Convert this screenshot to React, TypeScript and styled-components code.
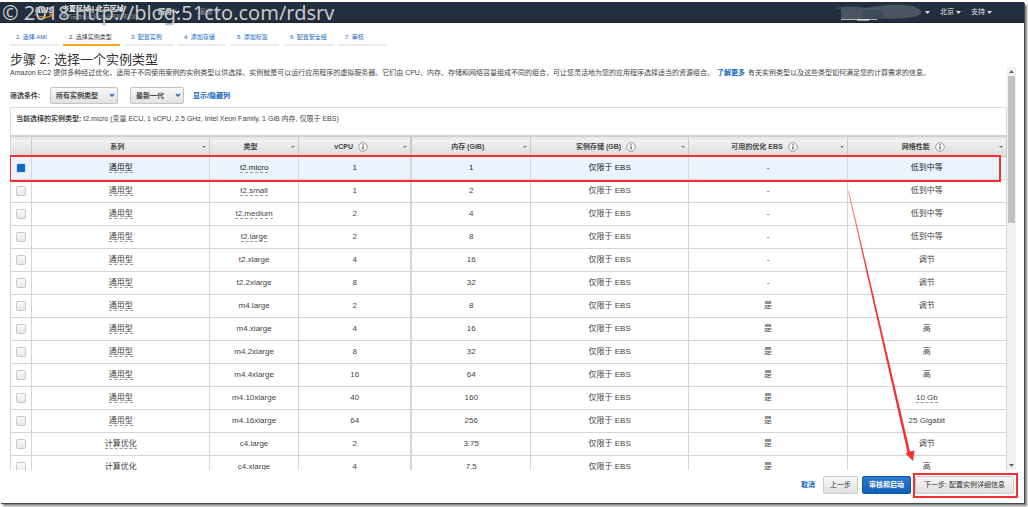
import React from "react";
import styled, { createGlobalStyle, css } from "styled-components";

const RED = "#f5302f";
const LINE = "#d5d5d5";

const GlobalStyle = createGlobalStyle`
  *, *::before, *::after { box-sizing: border-box; }
  html, body { margin: 0; padding: 0; background: #fff; }
  body {
    font-family: "Liberation Sans", "Noto Sans CJK SC", sans-serif;
    font-size: 8px;
    line-height: 12px;
    color: #444;
  }
  a { color: #1166bb; text-decoration: none; }
  button, select, input { font: inherit; color: inherit; margin: 0; }
`;

const Stage = styled.div`
  height: 100vh;
  min-height: 400px;
  padding: 2px 4px 4px 0;
  overflow: hidden;
`;

const Frame = styled.div`
  position: relative;
  height: 100%;
  display: flex;
  flex-direction: column;
  background: #fff;
  box-shadow: 1px 1px 0 #4a4a4a, 3px 3px 2px 0 rgba(0, 0, 0, 0.5);
`;

const NavBar = styled.header`
  flex: none;
  height: 21px;
  display: flex;
  align-items: center;
  padding: 0 32px 0 34px;
  background: #232f3e;
  border-bottom: 1px solid #1a2430;
  color: #e4e6e8;
  font-size: 7px;
  line-height: 10px;
`;

const Region = styled.div`
  margin-left: 7px;
  font-size: 7px;
  font-weight: bold;
  line-height: 9px;
  color: #fff;
`;

const RegionNote = styled.div`
  font-size: 5px;
  font-weight: normal;
  line-height: 7px;
  color: #9aa3ad;
`;

const NavItem = styled.button<{ $gap?: number; $dim?: boolean }>`
  display: flex;
  align-items: center;
  gap: 2px;
  margin-left: ${(p) => p.$gap ?? 10}px;
  padding: 0;
  border: 0;
  background: none;
  opacity: ${(p) => (p.$dim ? 0.5 : 1)};
`;

const Spacer = styled.div`
  flex: 1;
`;

const Watermark = styled.div`
  position: absolute;
  left: 2px;
  top: -2px;
  font-family: "Noto Sans", sans-serif;
  font-size: 20px;
  line-height: 26px;
  white-space: nowrap;
  color: #c9cbce;
  text-shadow: 0 0 1px #1b222c;
  pointer-events: none;
`;

const Steps = styled.nav`
  flex: none;
  display: flex;
  gap: 5px;
  padding: 6px 10px 0;
`;

const Step = styled.a<{ $active?: boolean; $w: number }>`
  width: ${(p) => p.$w}px;
  height: 17px;
  padding: 2px 6px 0;
  font-size: 6px;
  line-height: 12px;
  white-space: nowrap;
  border-bottom: 2px solid #ececec;
  ${(p) =>
    p.$active &&
    css`
      color: #444;
      border-color: #f5a623;
    `}
`;

const Title = styled.h1`
  flex: none;
  margin: 0;
  padding: 6px 10px 0;
  font-size: 13px;
  font-weight: normal;
  line-height: 15px;
  color: #333;
`;

const Body = styled.div`
  flex: 1;
  min-height: 0;
  display: flex;
  padding: 0 8px 0 10px;
`;

const Content = styled.main`
  flex: 1;
  min-width: 0;
  overflow: hidden;
`;

const Intro = styled.p`
  margin: 0;
  font-size: 7px;
  line-height: 11px;
  white-space: nowrap;
`;

const MoreLink = styled.a`
  margin: 0 3px;
  font-weight: bold;
`;

const Filters = styled.div`
  display: flex;
  align-items: center;
  padding: 9px 0 3px;
  font-size: 7px;
  font-weight: bold;
`;

const FilterLabel = styled.label`
  width: 40px;
`;

const SelectWrap = styled.span`
  position: relative;
  display: flex;
  margin-right: 12px;
  svg {
    position: absolute;
    right: 3px;
    top: 6px;
    pointer-events: none;
  }
`;

const Select = styled.select<{ $w: number }>`
  appearance: none;
  width: ${(p) => p.$w}px;
  height: 17px;
  padding: 0 5px;
  border: 1px solid #c4c4c4;
  border-radius: 2px;
  background: linear-gradient(#f8f8f8, #e2e2e2);
  outline: none;
`;

const ColumnsLink = styled.a`
  margin-left: -3px;
`;

const Current = styled.div`
  height: 28px;
  padding: 5px;
  border: 1px solid #dcdcdc;
  border-bottom: 0;
  font-size: 7px;
`;

const TableWrap = styled.div`
  position: relative;
`;

const Table = styled.table`
  width: 100%;
  table-layout: fixed;
  border-collapse: separate;
  border-spacing: 0;
  border-left: 1px solid ${LINE};
  text-align: center;
`;

const Th = styled.th<{ $thick?: boolean }>`
  height: 22px;
  padding: 0;
  font-size: 7px;
  background: linear-gradient(#e6e6e6, #f0f0f0 20%, #dedede);
  border-top: 2px solid #cfcfcf;
  border-bottom: 1px solid #bdbdbd;
  border-right: ${(p) => (p.$thick ? "2px" : "1px")} solid #c9c9c9;
`;

const HeadInner = styled.div`
  display: flex;
  align-items: center;
  padding-right: 3px;
`;

const HeadLabel = styled.span`
  flex: 1;
  display: flex;
  align-items: center;
  justify-content: center;
  gap: 5px;
`;

const Td = styled.td<{ $thick?: boolean }>`
  height: 23px;
  padding: 0;
  border-bottom: 1px solid ${LINE};
  border-right: ${(p) => (p.$thick ? "2px" : "1px")} solid ${LINE};
`;

const Row = styled.tr<{ $selected?: boolean }>`
  ${(p) =>
    p.$selected &&
    css`
      background: #eaf3fe;
      color: #222;
    `}
`;

const Hint = styled.span`
  display: inline-block;
  line-height: 9px;
  border-bottom: 1px dashed #999;
`;

const Check = styled.input`
  appearance: none;
  display: block;
  width: 10px;
  height: 10px;
  margin: 0 auto;
  border: 1px solid #c8c8c8;
  border-radius: 2px;
  background: linear-gradient(#fafafa, #e8e8e8);
  &:checked {
    border-color: #d3dfec;
    background: #1568c4;
  }
`;

const RowMark = styled.div`
  position: absolute;
  left: -1px;
  right: 6px;
  top: 20px;
  height: 27px;
  border: 2px solid ${RED};
  pointer-events: none;
`;

const ScrollTrack = styled.div`
  flex: none;
  width: 9px;
  display: flex;
  flex-direction: column;
  align-items: center;
  justify-content: space-between;
  background: #f1f1f1;
  padding: 3px 0;
`;

const ScrollThumb = styled.div`
  width: 7px;
  height: 37%;
  margin-top: 3px;
  background: #c1c1c1;
`;

const Footer = styled.footer`
  flex: none;
  height: 33px;
  display: flex;
  align-items: flex-start;
  justify-content: flex-end;
  gap: 4px;
  padding: 6px 10px 0;
  font-size: 7px;
`;

const Cancel = styled.a`
  margin-right: 4px;
  line-height: 17px;
  font-weight: bold;
`;

const Button = styled.button<{ $primary?: boolean; $wide?: boolean }>`
  height: 18px;
  padding: 0 ${(p) => (p.$wide ? 8 : 6)}px;
  border: 1px solid ${(p) => (p.$primary ? "#0f58a8" : "#cacaca")};
  border-radius: 2px;
  background: ${(p) =>
    p.$primary ? "linear-gradient(#2b7bd3, #1160b8)" : "linear-gradient(#f8f8f8, #e0e0e0)"};
  color: ${(p) => (p.$primary ? "#fff" : "#333")};
  font-weight: ${(p) => (p.$primary ? "bold" : "normal")};
  white-space: nowrap;
`;

const Marked = styled.span`
  position: relative;
  display: flex;
  &::after {
    content: "";
    position: absolute;
    inset: -3px -4px -4px -2px;
    border: 2px solid ${RED};
    pointer-events: none;
  }
`;

const Pointer = styled.svg`
  position: absolute;
  right: 106px;
  bottom: 41px;
  pointer-events: none;
`;

const Caret = ({ up, color = "#666" }: { up?: boolean; color?: string }) => (
  <svg width="5" height="3" viewBox="0 0 5 3" aria-hidden="true">
    <path d={up ? "M0 3h5L2.500 0z" : "M0 0h5L2.500 3z"} fill={color} />
  </svg>
);

const SortCaret = () => (
  <svg width="4" height="2" viewBox="0 0 4 2" aria-hidden="true">
    <path d="M0 0h4L2 2z" fill="#777" />
  </svg>
);

const Chevron = ({ color }: { color: string }) => (
  <svg width="6" height="5" viewBox="0 0 6 5" aria-hidden="true">
    <path d="M1 1l2 2 2-2" fill="none" stroke={color} strokeWidth="1.4" />
  </svg>
);

const Info = () => (
  <svg width="10" height="10" viewBox="0 0 10 10" aria-hidden="true">
    <circle cx="5" cy="5" r="4.300" fill="#f7f7f7" stroke="#888" strokeWidth=".8" />
    <path d="M5 4.200v3.200M5 2.200v1.200" stroke="#555" strokeWidth="1.200" />
  </svg>
);

const AwsLogo = () => (
  <svg width="21" height="14" viewBox="0 0 21 14" aria-label="aws">
    <text x="1" y="8" fill="#fff" fontSize="10" fontWeight="bold" fontFamily="Liberation Sans, sans-serif">
      aws
    </text>
    <path d="M1 9.500Q10 15 18 10.500M15.500 9.500l3.500 0-1 3" fill="none" stroke="#f79400" strokeWidth="1.300" />
  </svg>
);

const Scribble = () => (
  <svg width="88" height="17" viewBox="0 0 88 17" aria-hidden="true">
    <path d="M0 4Q16 1 32 4Q58 -2 78 2Q92 8 82 12Q66 16 44 14L42 16H6V5z" fill="#4b555f" />
    <path d="M27 6h21v9H27z" fill="#3f4b57" />
    <path d="M6 15.500h36" stroke="#aeb4ba" />
    <path d="M22 16h12" stroke="#fff" />
  </svg>
);

const steps: [string, number][] = [
  ["选择 AMI", 48],
  ["选择实例类型", 57],
  ["配置实例", 48],
  ["添加存储", 48],
  ["添加标签", 48],
  ["配置安全组", 50],
  ["审核", 48],
];

const columns: { label: string; width?: string; info?: boolean; thick?: boolean }[] = [
  { label: "系列", width: "17.900%" },
  { label: "类型", width: "8.900%" },
  { label: "vCPU", width: "11.400%", info: true, thick: true },
  { label: "内存 (GiB)", width: "11.900%" },
  { label: "实例存储 (GB)", width: "15.900%", info: true },
  { label: "可用的优化 EBS", width: "15.900%", info: true },
  { label: "网络性能", info: true },
];

const G = "通用型";
const C = "计算优化";
const rows: [string, string, string, string, string, string][] = [
  [G, "t2.micro", "1", "1", "-", "低到中等"],
  [G, "t2.small", "1", "2", "-", "低到中等"],
  [G, "t2.medium", "2", "4", "-", "低到中等"],
  [G, "t2.large", "2", "8", "-", "低到中等"],
  [G, "t2.xlarge", "4", "16", "-", "调节"],
  [G, "t2.2xlarge", "8", "32", "-", "调节"],
  [G, "m4.large", "2", "8", "是", "调节"],
  [G, "m4.xlarge", "4", "16", "是", "高"],
  [G, "m4.2xlarge", "8", "32", "是", "高"],
  [G, "m4.4xlarge", "16", "64", "是", "高"],
  [G, "m4.10xlarge", "40", "160", "是", "10 Gb"],
  [G, "m4.16xlarge", "64", "256", "是", "25 Gigabit"],
  [C, "c4.large", "2", "3.75", "是", "调节"],
  [C, "c4.xlarge", "4", "7.5", "是", "高"],
];
const hinted = new Set(["t2.micro", "t2.small", "t2.medium", "t2.large", "10 Gb"]);
const maybeHint = (t: string) => (hinted.has(t) ? <Hint>{t}</Hint> : t);

export default function App() {
  return (
    <>
      <GlobalStyle />
      <Stage>
        <Frame>
          <NavBar>
            <AwsLogo />
            <Region>
              宁夏区域 | 北京区域
              <RegionNote>由西云数据运营 | 由光环新网运营</RegionNote>
            </Region>
            <NavItem $gap={22}>
              <b>服务</b> <Chevron color="#fff" />
            </NavItem>
            <NavItem $dim $gap={18}>
              编辑 <Chevron color="#fff" />
            </NavItem>
            <Spacer />
            <Scribble />
            <NavItem $gap={2} aria-label="账户">
              <Caret color="#ddd" />
            </NavItem>
            <NavItem>
              北京 <Caret color="#ddd" />
            </NavItem>
            <NavItem>
              支持 <Caret color="#ddd" />
            </NavItem>
          </NavBar>

          <Steps>
            {steps.map(([label, w], i) => (
              <Step key={label} href="#" $active={i === 1} $w={w}>
                {i + 1}. {label}
              </Step>
            ))}
          </Steps>
          <Title>步骤 2: 选择一个实例类型</Title>

          <Body>
            <Content>
              <Intro>
                Amazon EC2 提供多种经过优化，适用于不同使用案例的实例类型以供选择。实例就是可以运行应用程序的虚拟服务器。它们由
                CPU、内存、存储和网络容量组成不同的组合，可让您灵活地为您的应用程序选择适当的资源组合。
                <MoreLink href="#">了解更多</MoreLink>
                有关实例类型以及这些类型如何满足您的计算需求的信息。
              </Intro>
              <Filters>
                <FilterLabel htmlFor="family">筛选条件:</FilterLabel>
                <SelectWrap>
                  <Select id="family" $w={68}>
                    <option>所有实例类型</option>
                  </Select>
                  <Chevron color="#1166bb" />
                </SelectWrap>
                <SelectWrap>
                  <Select aria-label="代" $w={54}>
                    <option>最新一代</option>
                  </Select>
                  <Chevron color="#1166bb" />
                </SelectWrap>
                <ColumnsLink href="#">显示/隐藏列</ColumnsLink>
              </Filters>
              <Current>
                <b>当前选择的实例类型:</b> t2.micro (变量 ECU, 1 vCPU, 2.5 GHz, Intel Xeon Family, 1 GiB 内存, 仅限于 EBS)
              </Current>
              <TableWrap>
                <Table>
                  <colgroup>
                    <col style={{ width: 21 }} />
                    {columns.map((c) => (
                      <col key={c.label} style={{ width: c.width }} />
                    ))}
                  </colgroup>
                  <thead>
                    <tr>
                      <Th />
                      {columns.map((c) => (
                        <Th key={c.label} $thick={c.thick}>
                          <HeadInner>
                            <HeadLabel>
                              {c.label}
                              {c.info && <Info />}
                            </HeadLabel>
                            <SortCaret />
                          </HeadInner>
                        </Th>
                      ))}
                    </tr>
                  </thead>
                  <tbody>
                    {rows.map(([family, type, cpu, mem, ebs, net], i) => (
                      <Row key={type} $selected={i === 0}>
                        <Td>
                          <Check type="checkbox" defaultChecked={i === 0} aria-label={type} />
                        </Td>
                        <Td><Hint>{family}</Hint></Td>
                        <Td>{maybeHint(type)}</Td>
                        <Td $thick>{cpu}</Td>
                        <Td>{mem}</Td>
                        <Td>仅限于 EBS</Td>
                        <Td>{ebs}</Td>
                        <Td>{maybeHint(net)}</Td>
                      </Row>
                    ))}
                  </tbody>
                </Table>
                <RowMark />
              </TableWrap>
            </Content>
            <ScrollTrack>
              <Caret up />
              <ScrollThumb />
              <Spacer />
              <Caret />
            </ScrollTrack>
          </Body>

          <Footer>
            <Cancel href="#">取消</Cancel>
            <Button>上一步</Button>
            <Button $primary>审核和启动</Button>
            <Marked>
              <Button $wide>下一步: 配置实例详细信息</Button>
            </Marked>
          </Footer>

          <Pointer width="70" height="272" viewBox="0 0 70 272" aria-hidden="true">
            <defs>
              <linearGradient id="fade" x1="0" y1="0" x2="0" y2="1">
                <stop offset="0" stopColor={RED} stopOpacity=".5" />
                <stop offset=".3" stopColor={RED} />
              </linearGradient>
            </defs>
            <path
              d="M0 1L1 1L62 261.500L66.500 260.500L65 271L57.500 263.500L59.500 262.500z"
              fill="url(#fade)"
            />
          </Pointer>
          <Watermark>© 2018 http://blog.51cto.com/rdsrv</Watermark>
        </Frame>
      </Stage>
    </>
  );
}
